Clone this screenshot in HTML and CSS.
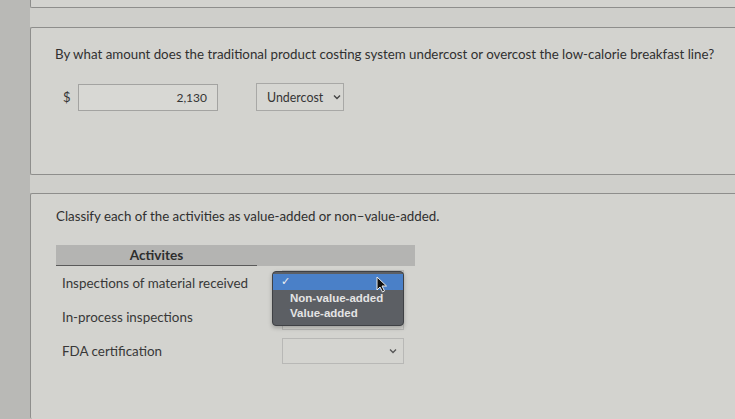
FILE: index.html
```html
<!DOCTYPE html>
<html>
<head>
<meta charset="utf-8">
<link rel="stylesheet" href="styles.css">
</head>
<body>
<div class="page">
  <aside class="strip"></aside>
  <main class="main">
    <section class="card card-top"></section>
    <section class="card card-q">
      <p class="question">By what amount does the traditional product costing system undercost or overcost the low-calorie breakfast line?</p>
      <div class="answer-row">
        <span class="currency">$</span>
        <div class="input">2,130</div>
        <div class="select select-cost"><span>Undercost</span>
          <svg class="chev" width="8" height="6" viewBox="0 0 8 6"><path d="M1 1.5 L4 4.5 L7 1.5" fill="none" stroke="#444" stroke-width="1.4"/></svg>
        </div>
      </div>
    </section>
    <section class="card card-class">
      <p class="question">Classify each of the activities as value-added or non–value-added.</p>
      <div class="table">
        <div class="thead">
          <div class="th">Activites</div>
          <div class="th th-empty"></div>
        </div>
        <div class="row">
          <span class="cell-text">Inspections of material received</span>
          <div class="select select-row"></div>
        </div>
        <div class="row">
          <span class="cell-text">In-process inspections</span>
          <div class="select select-row"></div>
        </div>
        <div class="row">
          <span class="cell-text">FDA certification</span>
          <div class="select select-row">
            <svg class="chev" width="8" height="6" viewBox="0 0 8 6"><path d="M1 1.5 L4 4.5 L7 1.5" fill="none" stroke="#555" stroke-width="1.3"/></svg>
          </div>
        </div>
        <div class="popup">
          <div class="opt opt-active"><span class="check">✓</span></div>
          <div class="opt">Non-value-added</div>
          <div class="opt">Value-added</div>
          <svg class="cursor" width="12" height="17" viewBox="0 0 12 17"><path d="M1 1 L1 14 L4 11 L6.5 16 L8.5 15 L6 10 L10.5 10 Z" fill="#111" stroke="#eee" stroke-width="1"/></svg>
        </div>
      </div>
    </section>
  </main>
</div>
</body>
</html>
```
FILE: styles.css
```css
html, body {
  margin: 0;
  padding: 0;
  height: 100%;
  overflow: hidden;
}
body {
  background: #cfcfcb;
  font-family: Lato, "Liberation Sans", sans-serif;
  color: #353535;
}
.page {
  display: flex;
  height: 419px;
}
.strip {
  width: 30px;
  flex: none;
  background: #b9b9b6;
}
.main {
  flex: 1;
  display: flex;
  flex-direction: column;
  overflow: hidden;
}
.card {
  background: #d3d3cf;
  border: 1px solid #8e8e8c;
  border-right: none;
  border-radius: 2px 0 0 2px;
}
.card-top {
  height: 7px;
  border-top: none;
  border-radius: 0 0 0 2px;
  flex: none;
}
.card-q {
  margin-top: 19px;
  flex: none;
  padding: 18px 0 0 24px;
  box-sizing: border-box;
  height: 148px;
}
.card-class {
  margin-top: 18px;
  flex: 1;
  padding: 14px 0 0 25px;
  border-bottom: none;
}
.question {
  margin: 0;
  font-size: 13.3px;
  line-height: 16px;
  color: #303030;
  white-space: nowrap;
}
.answer-row {
  display: flex;
  align-items: center;
  margin-top: 21px;
  padding-left: 8px;
}
.currency {
  font-size: 13px;
  width: 15px;
}
.input {
  width: 128px;
  height: 25px;
  border: 1px solid #a3a3a1;
  background: #d8d8d4;
  font-size: 12px;
  line-height: 25px;
  text-align: right;
  padding-right: 10px;
  margin-right: 38px;
}
.select {
  border: 1px solid #a8a8a6;
  background: #d6d6d2;
  display: flex;
  align-items: center;
  box-sizing: border-box;
}
.select-cost {
  width: 88px;
  height: 28px;
  font-size: 12.4px;
  padding: 0 2px 0 10px;
  justify-content: space-between;
}
.table {
  position: relative;
  margin-top: 21px;
  width: 359px;
}
.thead {
  display: flex;
  height: 21px;
  background: #b4b4b2;
}
.th {
  width: 201px;
  text-align: center;
  font-weight: bold;
  font-size: 13.6px;
  line-height: 21px;
  border-bottom: 1px solid #5a5a5a;
  color: #2e2e2e;
}
.th-empty {
  flex: 1;
  border-bottom: none;
}
.row {
  display: flex;
  align-items: center;
  height: 34px;
}
.row:first-of-type {
  margin-top: 1px;
}
.cell-text {
  width: 220px;
  padding-left: 6px;
  font-size: 13.4px;
  color: #383838;
  white-space: nowrap;
}
.select-row {
  width: 122px;
  height: 26px;
  border-color: #b8b8b6;
  background: #d4d4d0;
  justify-content: flex-end;
  padding-right: 6px;
}
.popup {
  position: absolute;
  left: 216px;
  top: 26px;
  width: 132px;
  height: 55px;
  box-sizing: border-box;
  background: #5c5f64;
  border: 1px solid #3f4145;
  border-radius: 4px;
  padding-top: 2px;
  box-shadow: 0 2px 4px rgba(0,0,0,0.25);
  font-family: "Liberation Sans", Arial, sans-serif;
  font-weight: bold;
  font-size: 11.5px;
  color: #e4e4e4;
}
.opt {
  height: 15px;
  line-height: 15px;
  padding-left: 17px;
}
.opt-active {
  background: #4a80c8;
  height: 16px;
  padding-left: 8px;
  margin-bottom: 1px;
}
.check {
  font-weight: normal;
  font-size: 11px;
  color: #f0f0f0;
}
.cursor {
  position: absolute;
  left: 103px;
  top: 4px;
}
```
